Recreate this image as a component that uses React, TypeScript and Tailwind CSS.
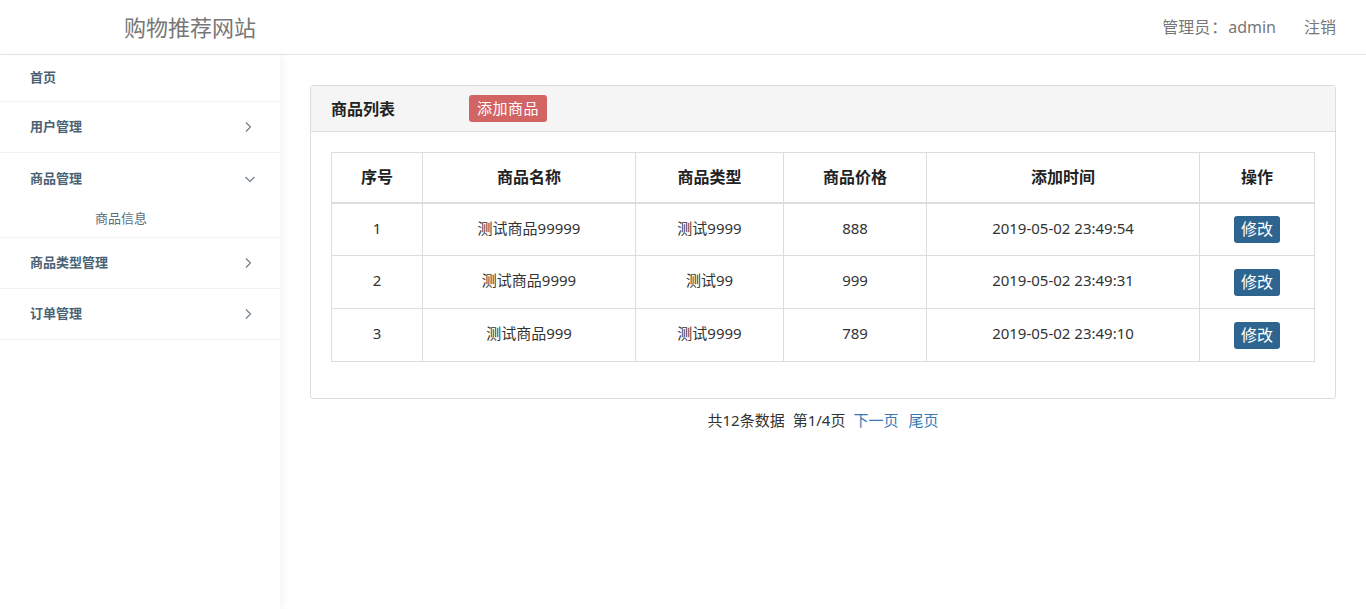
import React from "react";

const font = { fontFamily: '"Noto Sans", "Noto Sans CJK SC", sans-serif' };

function Chevron({ down }: { down?: boolean }) {
  return (
    <svg width="12" height="12" viewBox="0 0 12 12" className="text-[#6b7b88]">
      {down ? (
        <path d="M1.5 4 L6 8.5 L10.5 4" fill="none" stroke="currentColor" strokeWidth="1.1" />
      ) : (
        <path d="M4 1.5 L8.5 6 L4 10.5" fill="none" stroke="currentColor" strokeWidth="1.1" />
      )}
    </svg>
  );
}

const rows = [
  ["1", "测试商品99999", "测试9999", "888", "2019-05-02 23:49:54"],
  ["2", "测试商品9999", "测试99", "999", "2019-05-02 23:49:31"],
  ["3", "测试商品999", "测试9999", "789", "2019-05-02 23:49:10"],
];

export default function App() {
  return (
    <div className="w-[1366px] h-[609px] bg-white overflow-hidden flex flex-col" style={font}>
      <header className="h-[55px] shrink-0 border-b border-[#e5e5e5] flex items-center justify-between">
        <div className="pl-[124px] text-[22px] text-[#777] leading-none">购物推荐网站</div>
        <div className="flex items-center gap-[28px] pr-[30px] text-[16px] text-[#777]">
          <span>管理员<span className="mx-[1px]">：</span>admin</span>
          <span>注销</span>
        </div>
      </header>
      <div className="flex flex-1 min-h-0">
        <aside className="w-[280px] shrink-0 bg-white shadow-[4px_0_8px_rgba(0,0,0,0.04)] relative z-10">
          <div className="h-[47px] border-b border-[#f2f2f2] flex items-center pl-[30px] text-[13px] font-bold text-[#4a6273]">首页</div>
          <div className="h-[51px] border-b border-[#f2f2f2] flex items-center justify-between pl-[30px] pr-[26px] text-[13px] font-bold text-[#4a6273]">
            <span>用户管理</span>
            <Chevron />
          </div>
          <div className="border-b border-[#f2f2f2]">
            <div className="h-[51px] flex items-center justify-between pl-[30px] pr-[24px] text-[13px] font-bold text-[#4a6273]">
              <span>商品管理</span>
              <Chevron down />
            </div>
            <div className="h-[33px] flex items-start pl-[95px] pt-[5px] text-[13px] text-[#5a6e7c]">商品信息</div>
          </div>
          <div className="h-[51px] border-b border-[#f2f2f2] flex items-center justify-between pl-[30px] pr-[26px] text-[13px] font-bold text-[#4a6273]">
            <span>商品类型管理</span>
            <Chevron />
          </div>
          <div className="h-[51px] border-b border-[#f2f2f2] flex items-center justify-between pl-[30px] pr-[26px] text-[13px] font-bold text-[#4a6273]">
            <span>订单管理</span>
            <Chevron />
          </div>
        </aside>
        <main className="flex-1 pt-[30px] pl-[30px] pr-[30px]">
          <div className="border border-[#ddd] rounded-[3px]">
            <div className="h-[46px] bg-[#f5f5f5] border-b border-[#ddd] flex items-center pl-[20px]">
              <span className="text-[16px] font-bold text-[#222] w-[138px]">商品列表</span>
              <span className="bg-[#d26464] text-white text-[15px] rounded-[3px] px-[8px] h-[27px] flex items-center tracking-[0.5px]">添加商品</span>
            </div>
            <div className="pt-[20px] pb-[36px] px-[20px]">
              <table className="w-full border-collapse text-[#333]">
                <thead>
                  <tr className="h-[50px] text-[16px] font-bold text-[#222]">
                    <th className="border border-[#ddd] border-b-2 w-[91px]">序号</th>
                    <th className="border border-[#ddd] border-b-2 w-[213px]">商品名称</th>
                    <th className="border border-[#ddd] border-b-2 w-[148px]">商品类型</th>
                    <th className="border border-[#ddd] border-b-2 w-[143px]">商品价格</th>
                    <th className="border border-[#ddd] border-b-2 w-[273px]">添加时间</th>
                    <th className="border border-[#ddd] border-b-2">操作</th>
                  </tr>
                </thead>
                <tbody>
                  {rows.map((r) => (
                    <tr key={r[0]} className="h-[53px] text-[15px] text-center">
                      {r.map((c, i) => (
                        <td key={i} className="border border-[#ddd] pb-[3px] text-[#333]">{c}</td>
                      ))}
                      <td className="border border-[#ddd]">
                        <span className="inline-flex items-center justify-center bg-[#2d6590] text-white text-[16px] rounded-[3px] w-[46px] h-[27px]">修改</span>
                      </td>
                    </tr>
                  ))}
                </tbody>
              </table>
            </div>
          </div>
          <div className="flex justify-center mt-[10px] text-[15px] text-[#333]">
            <span className="mr-[8px]">共12条数据</span>
            <span className="mr-[8px]">第1/4页</span>
            <span className="text-[#337ab7] mr-[10px]">下一页</span>
            <span className="text-[#337ab7]">尾页</span>
          </div>
        </main>
      </div>
    </div>
  );
}
